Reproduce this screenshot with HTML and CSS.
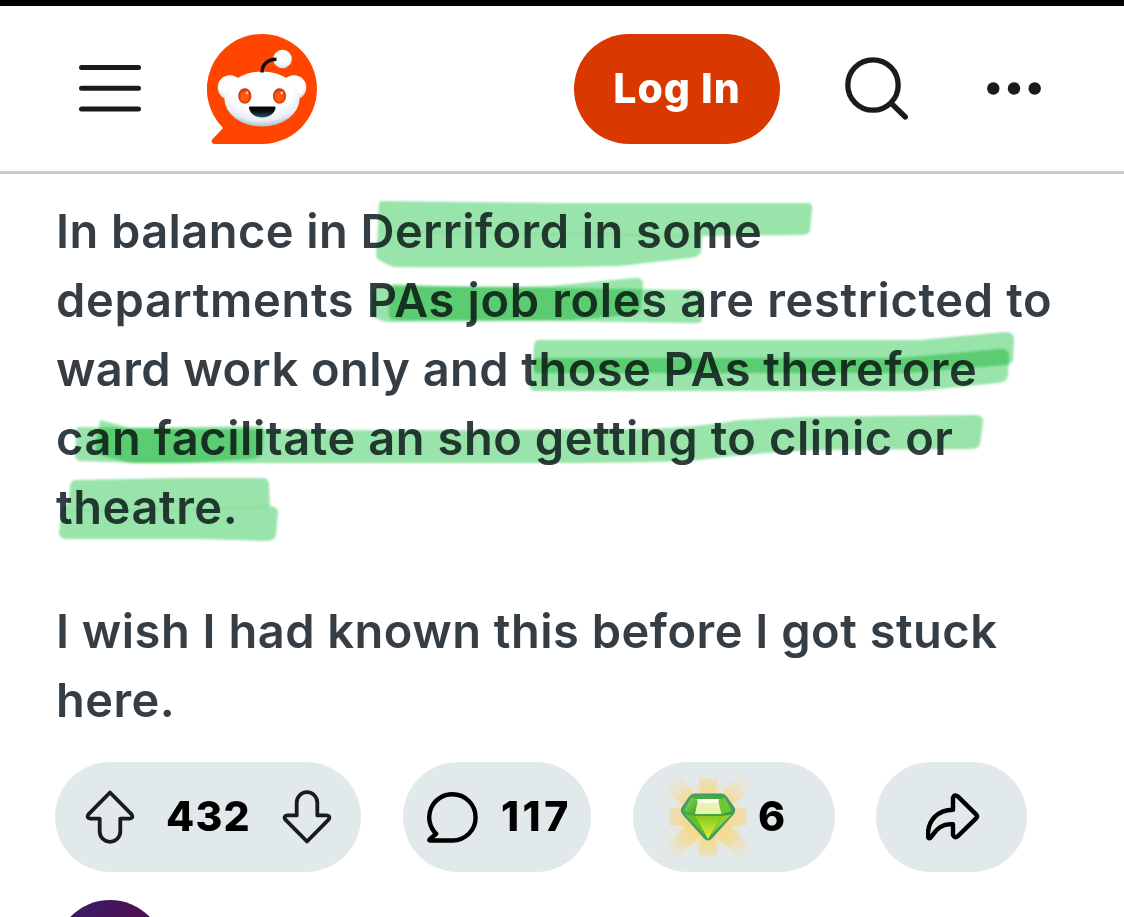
FILE: index.html
```
<!DOCTYPE html>
<html lang="en">
<head>
    <meta charset="UTF-8">
    <meta name="viewport" content="width=device-width, initial-scale=1.0">
    <title>Reddit</title>
    <link rel="stylesheet" href="styles.css">
</head>
<body>
    <!-- Header -->
    <header class="header">
        <svg class="menu-icon" width="62" height="48" viewBox="0 0 62 48">
            <path d="M2.5 3.5H59.500M2.500 24.300H59.500M2.500 45.100H59.500"/>
        </svg>

        <svg class="logo" width="110" height="110" viewBox="0 0 110 110">
            <defs>
                <radialGradient id="face" cx="50%" cy="32%" r="68%">
                    <stop offset="0.6" stop-color="#ffffff"/>
                    <stop offset="0.85" stop-color="#e6edf3"/>
                    <stop offset="1" stop-color="#a9bfcd"/>
                </radialGradient>
                <radialGradient id="ball" cx="50%" cy="35%" r="65%">
                    <stop offset="0.65" stop-color="#ffffff"/>
                    <stop offset="1" stop-color="#c9d7e0"/>
                </radialGradient>
                <radialGradient id="eye" cx="50%" cy="55%" r="60%">
                    <stop offset="0.4" stop-color="#ff5a10"/>
                    <stop offset="1" stop-color="#b52c00"/>
                </radialGradient>
                <linearGradient id="mouth" x1="0" y1="0" x2="0" y2="1">
                    <stop offset="0.4" stop-color="#08090a"/>
                    <stop offset="1" stop-color="#2d5966"/>
                </linearGradient>
            </defs>
            <path fill="#ff4500" d="M55 0a55 55 0 0 1 0 110H7.500C5 110 3.600 107 5.400 105.200L16.100 94A55 55 0 0 1 55 0z"/>
            <circle cx="23" cy="53.500" r="12.300" fill="url(#ball)"/>
            <circle cx="87" cy="53.500" r="12.300" fill="url(#ball)"/>
            <ellipse cx="55" cy="65" rx="37.500" ry="27.500" fill="url(#face)"/>
            <circle cx="75.500" cy="25" r="9.300" fill="url(#ball)"/>
            <path d="M55 38.500C55 30 61 25.200 69.500 25.200" fill="none" stroke="#0b0c0d" stroke-width="3.400"/>
            <ellipse cx="37.800" cy="62" rx="6.600" ry="7.700" fill="url(#eye)"/>
            <ellipse cx="72.500" cy="62" rx="6.600" ry="7.700" fill="url(#eye)"/>
            <circle cx="40" cy="59" r="1.400" fill="#ffc3a5"/>
            <circle cx="74.700" cy="59" r="1.400" fill="#ffc3a5"/>
            <path fill="url(#mouth)" d="M43.500 72.500H67c1.300 0 1.800 1 1.500 2C67 80 62 83.500 55.200 83.500S43.500 80 42 74.500c-.3-1 .2-2 1.500-2z"/>
        </svg>

        <button class="login">Log In</button>

        <svg class="search-icon" width="64" height="64" viewBox="0 0 64 64">
            <circle cx="28" cy="28" r="25.200"/>
            <path d="M46.500 46.500L60.300 60"/>
        </svg>

        <svg class="more-icon" width="54" height="13" viewBox="0 0 54 13">
            <circle cx="6.300" cy="6.500" r="6.200"/>
            <circle cx="27" cy="6.500" r="6.200"/>
            <circle cx="47.700" cy="6.500" r="6.200"/>
        </svg>
    </header>

    <!-- Post -->
    <main class="post">
        <p>
            <span class="line">In balance in Derriford in some</span>
            <span class="line l2">departments PAs job roles are restricted to</span>
            <span class="line">ward work only and those PAs therefore</span>
            <span class="line l4">can facilitate an sho getting to clinic or</span>
            <span class="line l5">theatre.</span>
        </p>
        <p>
            <span class="line l6">I wish I had known this before I got stuck</span>
            <span class="line">here.</span>
        </p>

        <!-- Marker strokes over the text -->
        <svg class="marker" width="1124" height="400" viewBox="0 174 1124 400">
            <path d="M382 201L560 203H808Q813 203 812 210L810 231Q809 235 800 235L702 236L701 252Q700 257 690 258L620 266Q540 268 394 267Q384 264 377 258Q375 254 377 245L379 205Q379 201 382 201z"/>
            <path d="M378 286L560 288L700 290Q704 290 703 298L702 320Q701 324 690 323L550 321L388 322Q376 320 371 315L373 290z"/>
            <path d="M392 284Q470 288 550 286L635 278Q644 277 643 285L641 308Q640 314 630 315L570 320H395Q387 319 389 308z"/>
            <path d="M539 340Q740 340 920 340L1005 332Q1015 332 1014 341L1013 360Q1012 365 1004 365L910 373H538Q532 372 533 362L534 345Q535 340 539 340z"/>
            <path d="M534 358H900L1000 349Q1010 349 1009 356L1008 376Q1006 383 998 383L920 391H535Q529 391 530 382z"/>
            <path d="M77 427Q300 432 650 429Q700 427 740 420L800 417L975 415Q984 415 983 423L980 444Q979 449 970 449L820 450Q760 452 700 460Q660 463 560 463H140L79 461Q74 460 75 450z"/>
            <path d="M100 420Q116 424 130 428L260 426Q265 427 264 434L262 453Q261 458 250 459L180 463H130Q115 459 97 454Q95 450 97 440z"/>
            <path d="M76 480L180 478H263Q269 478 269 486L270 506Q278 507 278 512L276 535Q276 540 267 541L200 539L65 539Q59 538 59 532L62 508Q69 505 69 498L70 486Q71 480 76 480z"/>
            <path class="seam" d="M381 232L560 234L700 236M70 510L180 510L268 507"/>
        </svg>
    </main>

    <!-- Action bar -->
    <div class="actions">
        <div class="pill votes">
            <svg width="50" height="54" viewBox="0 0 50 54">
                <path d="M25 2.500L46.600 24.300Q48.800 28.300 44.500 28.600H35.300V41.500A10.300 10.300 0 0 1 14.700 41.500V28.600H5.500Q1.200 28.300 3.400 24.300z"/>
            </svg>
            <span class="vote-count">432</span>
            <svg class="down" width="50" height="54" viewBox="0 0 50 54">
                <path d="M25 2.500L46.600 24.300Q48.800 28.300 44.500 28.600H35.300V41.500A10.300 10.300 0 0 1 14.700 41.500V28.600H5.500Q1.200 28.300 3.400 24.300z"/>
            </svg>
        </div>

        <div class="pill comments">
            <svg width="51" height="51" viewBox="0 0 51 51">
                <path d="M25.500 2.300a23 23 0 0 1 0 46.200H3.300Q1.500 48.500 2.800 47.200L9.200 41.800A23 23 0 0 1 25.500 2.300z"/>
            </svg>
            <span>117</span>
        </div>

        <div class="pill awards">
            <svg class="gem" width="94" height="94" viewBox="0 0 94 94">
                <defs>
                    <radialGradient id="ray" gradientUnits="userSpaceOnUse" cx="47" cy="47" r="60">
                        <stop offset="0.35" stop-color="#f9d77c"/>
                        <stop offset="0.6" stop-color="#f3dba2"/>
                        <stop offset="1" stop-color="#e8e5cf" stop-opacity="0"/>
                    </radialGradient>
                    <radialGradient id="glow" gradientUnits="userSpaceOnUse" cx="47" cy="47" r="38">
                        <stop offset="0.5" stop-color="#f9d77c"/>
                        <stop offset="1" stop-color="#f8dc8a" stop-opacity="0"/>
                    </radialGradient>
                    <linearGradient id="gemBase" x1="0" y1="0" x2="1" y2="1">
                        <stop offset="0" stop-color="#4fae4a"/>
                        <stop offset="1" stop-color="#3c9a22"/>
                    </linearGradient>
                    <linearGradient id="gemLeft" x1="0" y1="0" x2="1" y2="1">
                        <stop offset="0" stop-color="#93dc5c"/>
                        <stop offset="1" stop-color="#3c9f22"/>
                    </linearGradient>
                    <linearGradient id="gemFront" x1="0" y1="0" x2="0" y2="1">
                        <stop offset="0" stop-color="#86c91f"/>
                        <stop offset="1" stop-color="#e4f23a"/>
                    </linearGradient>
                </defs>
                <g class="rays">
                    <path d="M38 8H56L54 47L56 86H38L40 47zM8 38L47 40L86 38V56L47 54L8 56z"/>
                    <path d="M14 4L47 36L80 4L93 16L59 47L93 78L80 90L47 58L14 90L1 78L35 47L1 16z"/>
                </g>
                <circle class="glow" cx="47" cy="47" r="38"/>
                <path fill="url(#gemBase)" stroke="#3f9a7c" stroke-width="2" stroke-linejoin="round" d="M34 24.500H60Q63 24.500 65 27L73 38.500Q74 41 72 43.500L50 68Q47 71 44 68L22 43.500Q20 41 21 38.500L29 27Q31 24.500 34 24.500z"/>
                <path fill="url(#gemLeft)" d="M30 28L37 29L34 44L23 41z"/>
                <path fill="#6cc63a" d="M64 28L57 29L60.500 44L71 41z"/>
                <path fill="#e9f3b0" d="M37 29.500H57L60.500 44H34z"/>
                <path fill="#fbfde6" d="M36 29H58L57 33H37z"/>
                <path fill="url(#gemFront)" d="M34 46H60.500L47 69z"/>
                <path fill="#67bf2c" d="M24 44.500L34 46L45 66z"/>
                <path fill="#8ed02c" d="M70.500 44.500L60.500 46L49 66z"/>
            </svg>
            <span>6</span>
        </div>

        <div class="pill share">
            <svg width="54" height="48" viewBox="0 0 54 48">
                <path d="M27 4.800Q28.500 .8 31.800 3.400L50.300 21.600Q51.800 23.400 50.300 25.100L31.800 43.200Q28.500 45.700 27 42V31.200C16 30.500 10.500 36 5.500 43.500C4 46.300 1.800 45.300 1.800 42.500C2 27 11.500 17 27 16.700z"/>
            </svg>
        </div>
    </div>

    <!-- First comment -->
    <div class="comment">
        <div class="avatar"></div>
    </div>
</body>
</html>
```
FILE: styles.css
```
* {
    box-sizing: border-box;
}

body {
    margin: 0;
    background: #fff;
    border-top: 6px solid #000;
    font-family: Inter, "Liberation Sans", sans-serif;
}

.header {
    display: flex;
    align-items: center;
    height: 168px;
    padding-left: 79px;
    border-bottom: 3px solid #cbcbcb;
}

.menu-icon {
    margin-bottom: 2px;
    fill: none;
    stroke: #181c1f;
    stroke-width: 5;
    stroke-linecap: round;
}

.logo {
    margin-left: 66px;
}

.login {
    width: 206px;
    height: 110px;
    margin-left: 257px;
    padding: 0 0 2px;
    border: none;
    border-radius: 55px;
    background: #d93900;
    color: #fff;
    font-family: inherit;
    font-size: 41px;
    font-weight: 800;
    letter-spacing: 1px;
}

.search-icon {
    margin-left: 65px;
    fill: none;
    stroke: #181c1f;
    stroke-width: 5.3;
    stroke-linecap: round;
}

.more-icon {
    margin-left: 78px;
    fill: #181c1f;
}

.post {
    position: relative;
    height: 588px;
    padding: 22px 0 0 56px;
}

.post p {
    margin: 0 0 55px;
    color: #363e45;
    font-size: 47px;
    font-weight: 560;
    line-height: 69px;
}

.line {
    display: block;
    white-space: nowrap;
    letter-spacing: 0.44px;
}

.l2 {
    letter-spacing: 0.67px;
}

.l4,
.l5 {
    letter-spacing: 0.57px;
}

.l6 {
    letter-spacing: 0.5px;
}

.marker {
    position: absolute;
    top: 0;
    left: 0;
    fill: #98e4aa;
    mix-blend-mode: multiply;
}

.marker path {
    mix-blend-mode: multiply;
    filter: blur(0.8px);
}

.marker .seam {
    fill: none;
    stroke: #eaf9ee;
    stroke-width: 2;
}

.actions {
    display: flex;
    height: 110px;
    padding-left: 55px;
}

.pill {
    display: flex;
    align-items: center;
    height: 110px;
    border-radius: 55px;
    background: #e2e9eb;
    color: #000;
    font-size: 41px;
    font-weight: 800;
}

.pill span {
    padding-bottom: 2px;
}

.pill svg {
    flex: none;
    fill: none;
    stroke: #000;
    stroke-width: 4.4;
    stroke-linejoin: round;
}

.votes {
    width: 306px;
    padding-left: 30px;
}

.votes svg {
    stroke: #181c1f;
    stroke-width: 3.8;
}

.vote-count {
    width: 147px;
    text-align: center;
    letter-spacing: 1.2px;
}

.votes .down {
    transform: rotate(180deg);
}

.comments {
    width: 188px;
    margin-left: 42px;
    padding-left: 24px;
}

.comments span {
    margin-left: 23px;
    letter-spacing: 3.5px;
}

.awards {
    width: 202px;
    margin-left: 42px;
    padding-left: 28px;
}

.pill .gem {
    stroke: none;
}

.rays {
    fill: url(#ray);
    opacity: 0.7;
}

.glow {
    fill: url(#glow);
    opacity: 0.6;
}

.awards span {
    margin-left: 3px;
}

.share {
    width: 151px;
    margin-left: 41px;
    padding-left: 50px;
}

.comment {
    height: 45px;
    padding: 28px 0 0 55px;
    overflow: hidden;
}

.avatar {
    width: 110px;
    height: 110px;
    border-radius: 50%;
    background: linear-gradient(100deg, #3d1a63 25%, #4b1155 60%, #4e0f45);
}
```
